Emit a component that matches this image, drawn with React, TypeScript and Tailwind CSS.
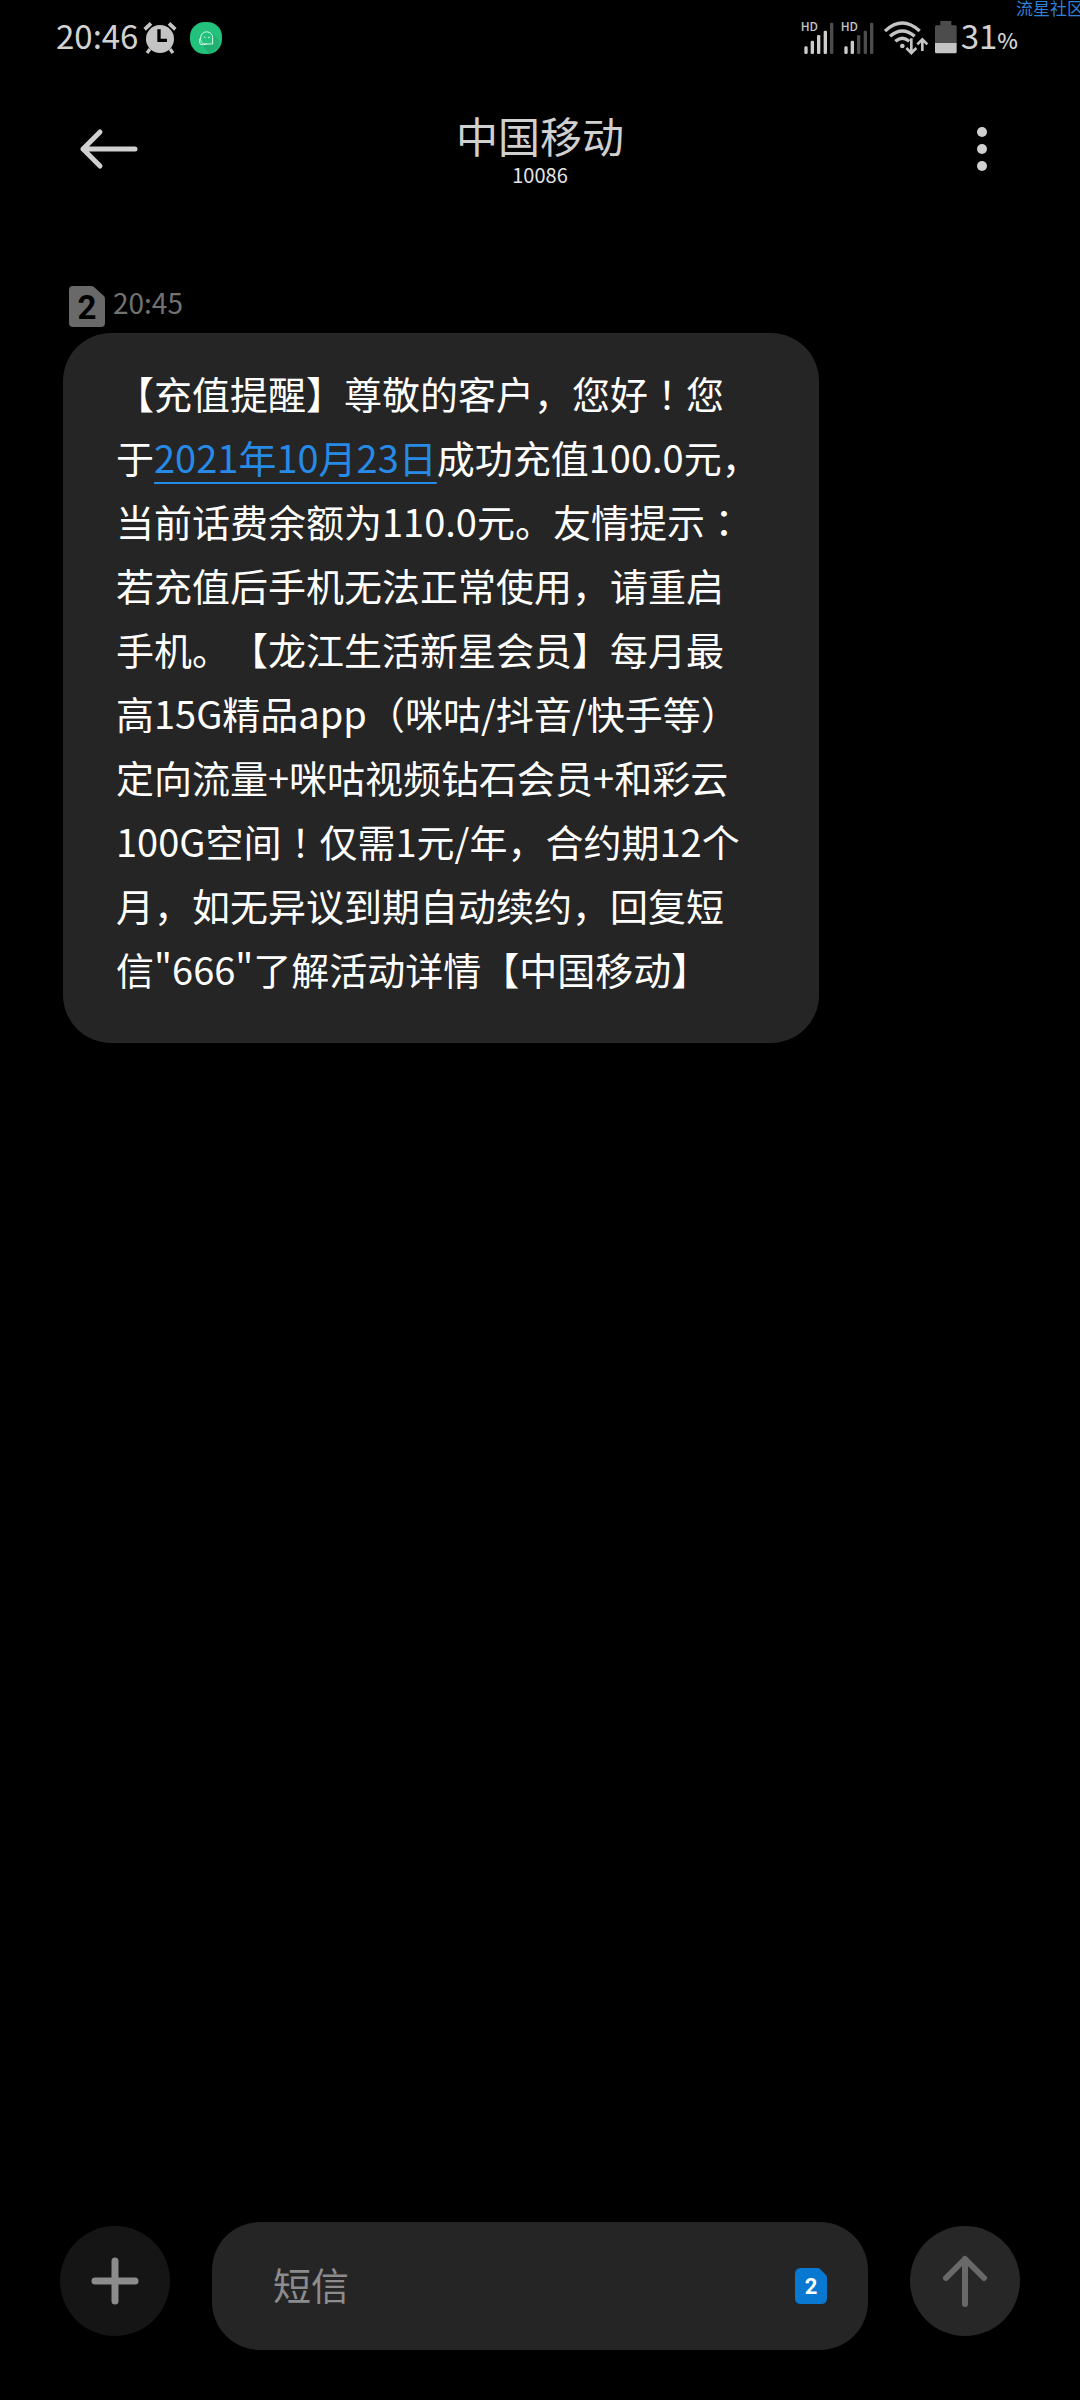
import { Fragment } from "react";

const FIRST_LINE = "【充值提醒】尊敬的客户，您好！您";
const REMAINING_LINES = [
  "当前话费余额为110.0元。友情提示：",
  "若充值后手机无法正常使用，请重启",
  "手机。【龙江生活新星会员】每月最",
  "高15G精品app（咪咕/抖音/快手等）",
  "定向流量+咪咕视频钻石会员+和彩云",
  "100G空间！仅需1元/年，合约期12个",
  "月，如无异议到期自动续约，回复短",
  "信\"666\"了解活动详情【中国移动】",
];

const BARS = [
  { x: 13, y: 79 },
  { x: 32, y: 62 },
  { x: 51, y: 45 },
  { x: 71, y: 32 },
  { x: 90, y: 8 },
];

// Colons and exclamation marks sit in the middle of their full-width cell.
function Line({ text }: { text: string }) {
  return (
    <>
      {text.split(/([！：])/).map((part, i) =>
        part === "！" || part === "：" ? (
          <span key={i} lang="zh-TW" className="font-['Noto_Sans_CJK_TC',sans-serif]">
            {part}
          </span>
        ) : (
          <Fragment key={i}>{part}</Fragment>
        ),
      )}
    </>
  );
}

function AlarmIcon() {
  return (
    <svg width="36" height="36" viewBox="0 0 108 108" aria-label="闹钟" className="shrink-0">
      <g stroke="#c4c4c4" fill="none">
        <path d="M8 28 27 10M81 10l19 18" strokeWidth="11" />
        <path d="M24 87 15 99M84 87l9 12" strokeWidth="10" />
      </g>
      <circle cx="54" cy="57" r="42" fill="#c4c4c4" />
      <path d="M51 28v33h24" fill="none" stroke="#000" strokeWidth="10" />
    </svg>
  );
}

function ChatAppIcon() {
  return (
    <svg width="32" height="32" viewBox="0 0 96 96" aria-label="聊天" className="shrink-0">
      <rect width="96" height="96" rx="44" fill="#22c17c" />
      <path d="M68 34 90 60Q82 88 56 94L36 66h32z" fill="#1fb072" />
      <g fill="none" stroke="#d5f6e7" strokeWidth="3" strokeLinecap="round" strokeLinejoin="round">
        <path d="M50 66h18V47a18 17 0 0 0-36-1q-2 14 8 19z" />
        <path d="M31 48q-5 7-2 12l2 7q10 3 19-1" />
        <path d="M42 46q2-3 4 0M55 46q2-3 4 0" />
      </g>
    </svg>
  );
}

function Signal({ level }: { level: number }) {
  return (
    <svg width="34" height="36" viewBox="0 0 102 108" aria-label="信号" className="shrink-0 overflow-visible">
      <text x="2" y="33" fontSize="36" fontWeight="500" fill="#c4c4c4" fontFamily="Noto Sans CJK SC, sans-serif">
        HD
      </text>
      {BARS.map((b, i) => (
        <rect key={b.x} x={b.x} y={b.y} width="10" height={102 - b.y} rx="4" fill={i < level ? "#cccccc" : "#4c4c4c"} />
      ))}
    </svg>
  );
}

function WifiIcon() {
  return (
    <svg width="45" height="36" viewBox="315 58 135 108" aria-label="无线网络" className="shrink-0">
      <g fill="none" stroke="#c4c4c4" strokeWidth="10">
        <path d="M318 91Q370 43 422 91" />
        <path d="M333 107q37-32 74 0" />
        <path d="M349 122q21-19 42 0" />
      </g>
      <circle cx="370" cy="136" r="7" fill="#c4c4c4" />
      <path d="M397 122v35M382 142l15 15 15-15M430 151v-36M415 131l15-15 15 15" fill="none" stroke="#000" strokeWidth="13" />
      <path d="M397 113v44M382 142l15 15 15-15M430 151v-36M415 131l15-15 15 15" fill="none" stroke="#c4c4c4" strokeWidth="8" />
    </svg>
  );
}

function BatteryIcon() {
  return (
    <svg width="22" height="33" viewBox="0 0 66 99" aria-label="电池" className="shrink-0">
      <path d="M16 0h33v13h12q4 0 4 4v50H0V17q0-4 4-4h12z" fill="#4c4c4c" />
      <path d="M0 66h65v27q0 4-4 4H4q-4 0-4-4z" fill="#c4c4c4" />
    </svg>
  );
}

export default function App() {
  return (
    <main
      lang="zh-CN"
      className="relative flex min-h-screen flex-col overflow-hidden bg-black font-['Noto_Sans_CJK_SC',sans-serif] [text-spacing-trim:space-all]"
    >
      <span className="absolute -right-1 top-0 text-[17px] leading-4 text-[#3080d8]">流星社区</span>

      <div className="flex h-[75px] items-center pl-14 pr-[62px] text-[33px] text-[#d2d2d2]">
        <time className="pb-1">20:46</time>
        <div className="ml-1 flex items-center gap-3">
          <AlarmIcon />
          <ChatAppIcon />
        </div>
        <div className="ml-auto flex items-center">
          <div className="flex items-center gap-1.5">
            <Signal level={4} />
            <Signal level={2} />
          </div>
          <div className="ml-2.5 flex items-center gap-1.5">
            <WifiIcon />
            <BatteryIcon />
          </div>
          <span className="ml-1 pb-1">
            31<span className="text-[22px] font-medium">%</span>
          </span>
        </div>
      </div>

      <header className="flex h-[148px] items-center justify-between px-[66px]">
        <button type="button" aria-label="返回" className="flex h-16 items-center pl-2.5">
          <svg width="64" height="48" viewBox="0 0 64 48" fill="none" stroke="#d0d0d0" strokeWidth="5" strokeLinecap="round" strokeLinejoin="round">
            <path d="M59 24H7M24 7 7 24l17 17" />
          </svg>
        </button>
        <div className="flex flex-col items-center">
          <h1 className="text-[42px] leading-[52px] text-[#d0d0d0]">中国移动</h1>
          <p className="text-[20px] leading-7 text-[#e4e4e4]">10086</p>
        </div>
        <button type="button" aria-label="更多选项" className="flex h-16 w-[74px] items-center justify-end pr-[26px]">
          <svg width="12" height="46" viewBox="0 0 12 46" fill="#d0d0d0" className="shrink-0">
            <circle cx="6" cy="6" r="5" />
            <circle cx="6" cy="23" r="5" />
            <circle cx="6" cy="40" r="5" />
          </svg>
        </button>
      </header>

      <section className="mt-[59px] flex flex-col items-start pl-[63px] pr-10">
        <div className="flex h-[51px] items-start gap-2 pl-1.5 pt-1">
          <svg width="36" height="41" viewBox="0 0 36 41" aria-label="SIM 2">
            <path d="M4 0h18q2 0 3 1l10 9q1 1 1 3v24q0 4-4 4H4q-4 0-4-4V4q0-4 4-4z" fill="#696969" />
            <text x="18" y="33" textAnchor="middle" fontSize="33" fontWeight="700" fill="#000" fontFamily="Roboto, sans-serif">
              2
            </text>
          </svg>
          <time className="text-[28px] leading-8 text-[#727272]">20:45</time>
        </div>
        <p className="whitespace-nowrap rounded-[48px] bg-[#252525] pb-[42px] pl-[53px] pr-[59px] pt-7 text-[38px] leading-[64px] text-white">
          <Line text={FIRST_LINE} />
          <br />
          于
          <a href="#date" className="text-[#268ae6] underline decoration-2 underline-offset-[9px]">
            2021年10月23日
          </a>
          成功充值100.0元，
          {REMAINING_LINES.map((line) => (
            <span key={line} className="block">
              <Line text={line} />
            </span>
          ))}
        </p>
      </section>

      <form className="mt-auto flex items-start gap-[42px] px-[60px] pb-[50px]" onSubmit={(e) => e.preventDefault()}>
        <button type="button" aria-label="添加" className="mt-1 flex size-[110px] shrink-0 items-center justify-center rounded-full bg-[#151515]">
          <svg width="48" height="48" viewBox="0 0 48 48" stroke="#8c8c8c" strokeWidth="7" strokeLinecap="round">
            <path d="M24 4v40M4 24h40" />
          </svg>
        </button>
        <div className="flex h-32 min-w-0 flex-1 items-center rounded-[48px] bg-[#252525] pl-[61px] pr-[41px]">
          <input
            type="text"
            aria-label="短信"
            placeholder="短信"
            className="h-16 min-w-0 flex-1 bg-transparent pb-1.5 text-[38px] text-white outline-none placeholder:text-[#8c8c8c]"
          />
          <button type="button" aria-label="选择 SIM 卡">
            <svg width="32" height="36" viewBox="0 0 32 36">
              <path d="M6 0h16q2 0 3 1l6 6q1 1 1 3v20q0 6-6 6H6q-6 0-6-6V6q0-6 6-6z" fill="#0878d0" />
              <text x="16" y="26" textAnchor="middle" fontSize="22" fontWeight="700" fill="#fff" fontFamily="Roboto, sans-serif">
                2
              </text>
            </svg>
          </button>
        </div>
        <button type="submit" aria-label="发送" className="mt-1 flex size-[110px] shrink-0 items-center justify-center rounded-full bg-[#272727]">
          <svg width="48" height="54" viewBox="0 0 48 54" fill="none" stroke="#696969" strokeWidth="6" strokeLinecap="round" strokeLinejoin="round">
            <path d="M24 50V5M5 24 24 5l19 19" />
          </svg>
        </button>
      </form>
    </main>
  );
}
